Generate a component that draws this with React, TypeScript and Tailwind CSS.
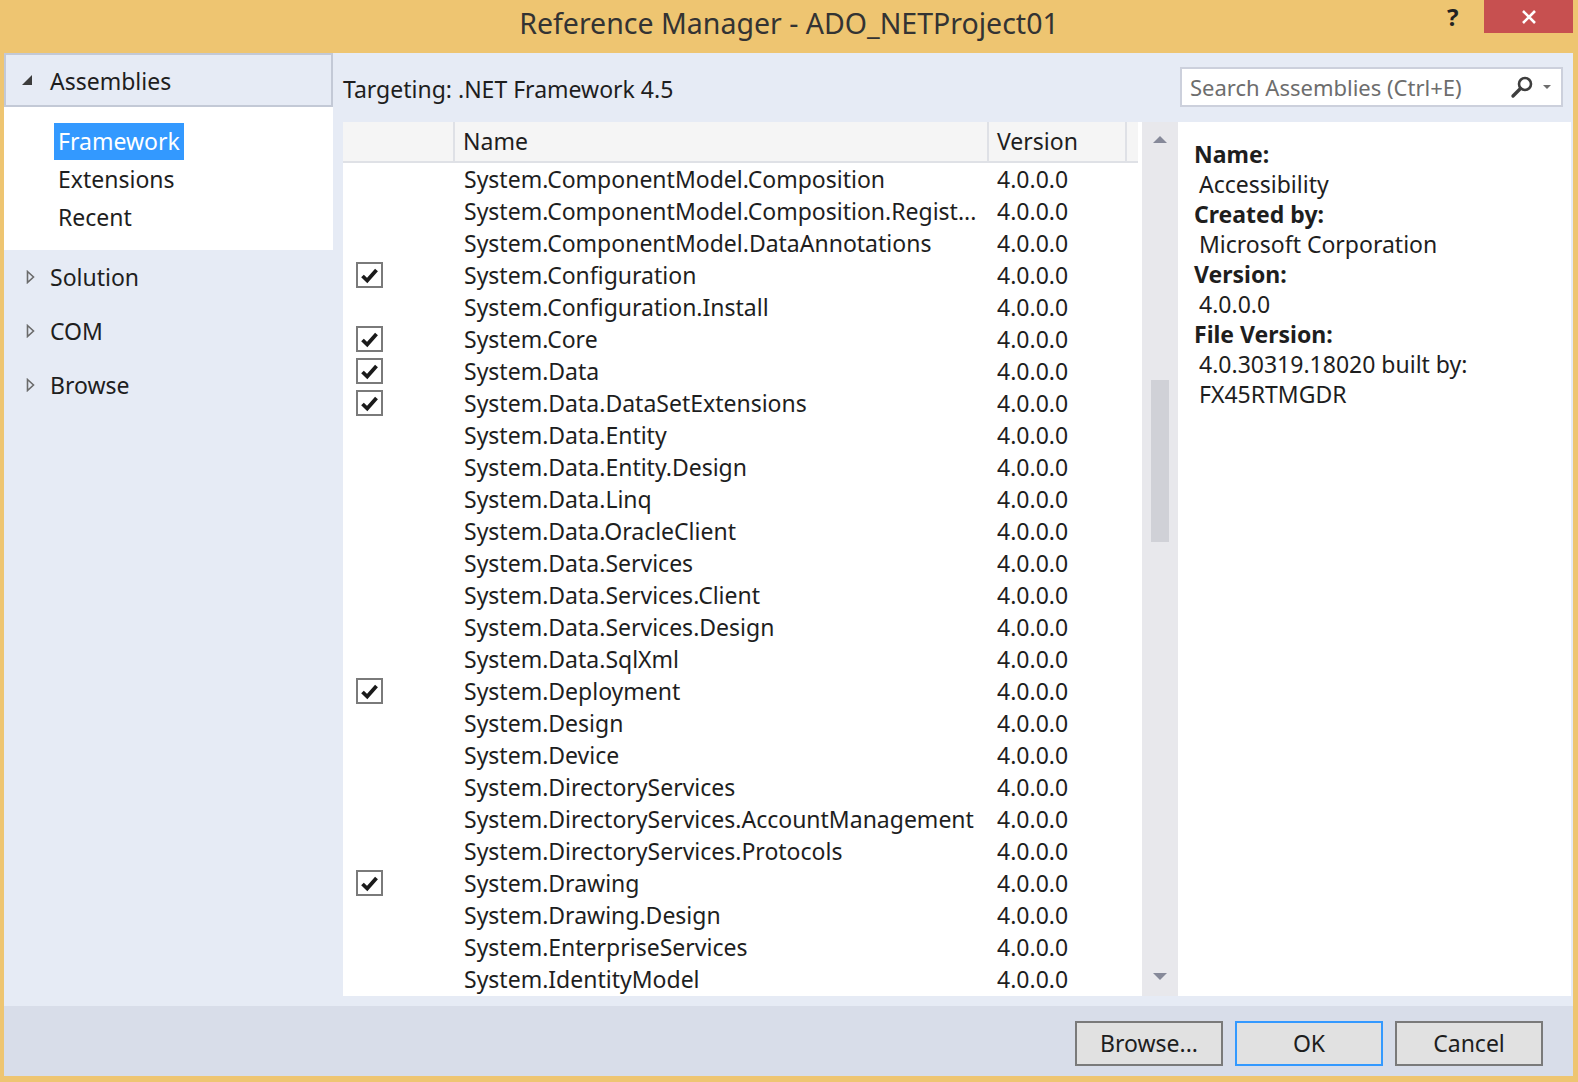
import { useState } from "react";

const rows: [string, boolean][] = [
  ["System.ComponentModel.Composition", false],
  ["System.ComponentModel.Composition.Regist...", false],
  ["System.ComponentModel.DataAnnotations", false],
  ["System.Configuration", true],
  ["System.Configuration.Install", false],
  ["System.Core", true],
  ["System.Data", true],
  ["System.Data.DataSetExtensions", true],
  ["System.Data.Entity", false],
  ["System.Data.Entity.Design", false],
  ["System.Data.Linq", false],
  ["System.Data.OracleClient", false],
  ["System.Data.Services", false],
  ["System.Data.Services.Client", false],
  ["System.Data.Services.Design", false],
  ["System.Data.SqlXml", false],
  ["System.Deployment", true],
  ["System.Design", false],
  ["System.Device", false],
  ["System.DirectoryServices", false],
  ["System.DirectoryServices.AccountManagement", false],
  ["System.DirectoryServices.Protocols", false],
  ["System.Drawing", true],
  ["System.Drawing.Design", false],
  ["System.EnterpriseServices", false],
  ["System.IdentityModel", false],
];

function Check() {
  return (
    <div className="w-[27px] h-[26px] border-2 border-[#7a7a7a] bg-white flex items-center justify-center">
      <svg width="19" height="17" viewBox="0 0 19 17">
        <path d="M2.5 9 L7.2 13.5 L16.5 3" fill="none" stroke="#1a1a1a" strokeWidth="3.8" strokeLinejoin="miter" />
      </svg>
    </div>
  );
}

function Closed({ label }: { label: string }) {
  return (
    <div className="h-[54px] flex items-center pl-[22px]">
      <svg width="10" height="14" viewBox="0 0 10 14" className="mr-[14px]">
        <path d="M1.5 1.5 L7.5 7 L1.5 12.5 Z" fill="none" stroke="#6b6b6b" strokeWidth="1.6" />
      </svg>
      <span>{label}</span>
    </div>
  );
}

export default function App() {
  const [sel, setSel] = useState("Framework");
  return (
    <div
      className="w-[1578px] h-[1082px] bg-[#eec571] flex flex-col text-[#1e1e1e] text-[23px] overflow-hidden"
      style={{ fontFamily: '"Noto Sans", "Open Sans", sans-serif' }}
    >
      {/* title bar */}
      <div className="h-[53px] relative flex items-center justify-center">
        <span className="text-[28.5px] text-[#333] -mt-[6px]">Reference Manager - ADO_NETProject01</span>
        <span className="absolute left-[1447px] top-[-1px] text-[24px] font-bold text-[#222]">?</span>
        <div className="absolute left-[1484px] top-0 w-[89px] h-[33px] bg-[#c75050] flex items-center justify-center">
          <svg width="16" height="16" viewBox="0 0 16 16">
            <path d="M2 2 L14 14 M14 2 L2 14" stroke="#fff" strokeWidth="2.6" />
          </svg>
        </div>
      </div>

      {/* body */}
      <div className="flex-1 ml-[4px] mr-[5px] mb-[6px] bg-[#e6ebf5] flex flex-col">
        <div className="flex flex-1">
          {/* left nav */}
          <div className="w-[329px] flex flex-col">
            <div className="h-[54px] border-2 border-[#c3c9d6] flex items-center pl-[14px]">
              <svg width="14" height="12" viewBox="0 0 14 12" className="mr-[16px]">
                <path d="M12 1 L12 11 L2 11 Z" fill="#3c3c3c" />
              </svg>
              <span className="mt-[2px]">Assemblies</span>
            </div>
            <div className="h-[143px] bg-white pt-[15px] pl-[50px] flex flex-col">
              {["Framework", "Extensions", "Recent"].map((t) => (
                <div key={t} className="h-[38px] flex items-center">
                  <span
                    onClick={() => setSel(t)}
                    className={`h-[37px] px-[4px] flex items-center ${sel === t ? "bg-[#3399ff] text-white" : ""}`}
                  >
                    {t}
                  </span>
                </div>
              ))}
            </div>
            <Closed label="Solution" />
            <Closed label="COM" />
            <Closed label="Browse" />
          </div>

          {/* right side */}
          <div className="flex-1 flex flex-col pl-[10px] pr-[2px]">
            <div className="h-[69px] flex items-center justify-between pr-[8px]">
              <span className="mt-[3px]">Targeting: .NET Framework 4.5</span>
              <div className="w-[383px] h-[40px] mt-[-1px] bg-white border-2 border-[#ccd0dc] flex items-center pl-[8px] pr-[6px]">
                <span className="flex-1 text-[#6d6d6d] text-[22px]">Search Assemblies (Ctrl+E)</span>
                <svg width="26" height="24" viewBox="0 0 26 24">
                  <circle cx="16" cy="9" r="6" fill="none" stroke="#3e3e3e" strokeWidth="2.6" />
                  <path d="M11.5 13.5 L4 21" stroke="#3e3e3e" strokeWidth="3.4" strokeLinecap="round" />
                </svg>
                <svg width="16" height="10" viewBox="0 0 16 10" className="ml-[4px]">
                  <path d="M4 3 L12 3 L8 7 Z" fill="#6d6d6d" />
                </svg>
              </div>
            </div>

            <div className="h-[874px] flex">
              {/* list */}
              <div className="w-[799px] bg-white flex flex-col">
                <div className="h-[41px] mr-[4px] bg-[#f5f5f5] border-b-2 border-[#dfe1e6] flex">
                  <div className="w-[112px] border-r-2 border-[#dfe1e6]" />
                  <div className="w-[534px] border-r-2 border-[#dfe1e6] flex items-center pl-[8px]">Name</div>
                  <div className="w-[138px] border-r-2 border-[#dfe1e6] flex items-center pl-[8px]">Version</div>
                  <div className="flex-1" />
                </div>
                {rows.map(([name, checked]) => (
                  <div key={name} className="h-[32px] flex items-center">
                    <div className="w-[112px] pl-[13px]">{checked && <Check />}</div>
                    <div className="w-[534px] pl-[9px] whitespace-nowrap overflow-hidden">{name}</div>
                    <div className="pl-[8px]">4.0.0.0</div>
                  </div>
                ))}
              </div>

              {/* scrollbar */}
              <div className="w-[36px] bg-[#e8e8ec] flex flex-col items-center">
                <svg width="18" height="10" viewBox="0 0 18 10" className="mt-[12px]">
                  <path d="M2 9 L16 9 L9 2 Z" fill="#868999" />
                </svg>
                <div className="w-[18px] h-[162px] bg-[#d0d1d7] mt-[236px]" />
                <div className="flex-1" />
                <svg width="18" height="10" viewBox="0 0 18 10" className="mb-[14px]">
                  <path d="M2 1 L16 1 L9 8 Z" fill="#868999" />
                </svg>
              </div>

              {/* details */}
              <div className="flex-1 bg-white pt-[17px] pl-[16px] leading-[30px]">
                <div className="font-bold">Name:</div>
                <div className="pl-[5px]">Accessibility</div>
                <div className="font-bold">Created by:</div>
                <div className="pl-[5px]">Microsoft Corporation</div>
                <div className="font-bold">Version:</div>
                <div className="pl-[5px]">4.0.0.0</div>
                <div className="font-bold">File Version:</div>
                <div className="pl-[5px]">4.0.30319.18020 built by:</div>
                <div className="pl-[5px]">FX45RTMGDR</div>
              </div>
            </div>
          </div>
        </div>

        {/* footer */}
        <div className="h-[70px] mt-[10px] bg-[#d8dde9] flex items-center justify-end gap-[12px] pr-[30px] pt-[10px] pb-[6px]">
          <button className="w-[148px] h-[45px] bg-[#e1e1e1] border-2 border-[#7a7a7a]">Browse...</button>
          <button className="w-[148px] h-[45px] bg-[#e1e1e1] border-2 border-[#3399ff]">OK</button>
          <button className="w-[148px] h-[45px] bg-[#e1e1e1] border-2 border-[#7a7a7a]">Cancel</button>
        </div>
      </div>
    </div>
  );
}
